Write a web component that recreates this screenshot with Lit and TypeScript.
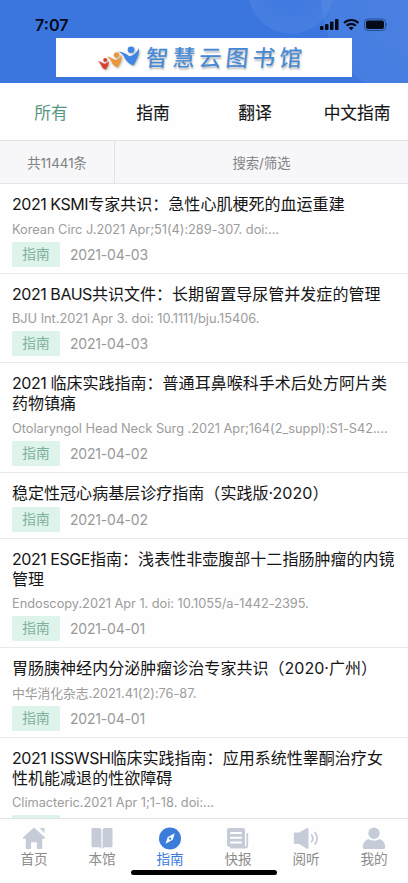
import { LitElement, html, css, svg, nothing } from "lit";
import { customElement } from "lit/decorators.js";
import { classMap } from "lit/directives/class-map.js";

interface Entry {
  latin: string;
  title: string;
  source?: string;
  date: string;
}

const entries: Entry[] = [
  { latin: "2021 KSMI", title: "专家共识：急性心肌梗死的血运重建", source: "Korean Circ J.2021 Apr;51(4):289-307. doi:...", date: "2021-04-03" },
  { latin: "2021 BAUS", title: "共识文件：长期留置导尿管并发症的管理", source: "BJU Int.2021 Apr 3. doi: 10.1111/bju.15406.", date: "2021-04-03" },
  { latin: "2021 ", title: "临床实践指南：普通耳鼻喉科手术后处方阿片类药物镇痛", source: "Otolaryngol Head Neck Surg .2021 Apr;164(2_suppl):S1-S42....", date: "2021-04-02" },
  { latin: "", title: "稳定性冠心病基层诊疗指南（实践版·2020）", date: "2021-04-02" },
  { latin: "2021 ESGE", title: "指南：浅表性非壶腹部十二指肠肿瘤的内镜管理", source: "Endoscopy.2021 Apr 1. doi: 10.1055/a-1442-2395.", date: "2021-04-01" },
  { latin: "", title: "胃肠胰神经内分泌肿瘤诊治专家共识（2020·广州）", source: "中华消化杂志.2021.41(2):76-87.", date: "2021-04-01" },
  { latin: "2021 ISSWSH", title: "临床实践指南：应用系统性睾酮治疗女性机能减退的性欲障碍", source: "Climacteric.2021 Apr 1;1-18. doi:...", date: "2021-04-01" },
];

const navItems = [
  { label: "首页", icon: svg`<path d="M13 1.600 2.200 11.200c-.7.7-.3 1.600.6 1.600h2V22c0 .7.4 1 1 1h3.500c.5 0 .8-.3.8-.8v-6h5.800v6c0 .5.3.8.8.8h3.500c.6 0 1-.3 1-1v-9.200h2c.9 0 1.300-.9.6-1.600z"/><path d="M18.800 2h4.600v5.200z"/>` },
  { label: "本馆", icon: svg`<path d="M4 2h6.200c1.300 0 2.200.8 2.200 2v19c-.7-1-1.600-1.700-2.700-1.700H4c-1 0-1.500-.5-1.500-1.500V3.500C2.500 2.500 3 2 4 2zM15.800 2h6.200c1 0 1.500.5 1.500 1.500v16.300c0 1-.5 1.500-1.500 1.500h-5.700c-1.100 0-2 .7-2.700 1.700V4c0-1.200.9-2 2.200-2z"/>` },
  { label: "指南", icon: svg`<circle cx="13" cy="12.500" r="11"/><path class="cut" d="m17.700 7.300-2 6.500-7.200 4 2.200-6.500z"/><circle cx="13.100" cy="12.600" r="1.200"/>` },
  { label: "快报", icon: svg`<path d="M4 2h14.200c1 0 1.800.8 1.800 1.800V21H4.200C3 21 2 20 2 18.800V4c0-1.200.8-2 2-2z"/><path class="slot" d="M6 7h10M6 11.700h10M6 16.400h10"/><path class="wave" d="M22.300 8v11c0 1.600-.9 2.600-2.500 2.600H6"/>` },
  { label: "阅听", icon: svg`<path d="M2 6.500h4.200l7.300-4.300c1-.6 2-.1 2 1v18.200c0 1.100-1 1.600-2 1l-7.300-4.500H2c-.7 0-1.200-.5-1.200-1.200v-9c0-.7.5-1.200 1.200-1.200z"/><path class="wave" d="M18.600 9c1.500 2 1.500 4.700 0 6.700M22 6.600c2.800 3.200 2.800 8.200 0 11.500"/>` },
  { label: "我的", icon: svg`<circle cx="13" cy="7.300" r="5.700"/><path d="M7.700 13c3.300 2.300 7.300 2.300 10.600 0 3.600 1.200 6 4.300 6 8 0 1.400-.8 2-2 2H3.700c-1.200 0-2-.6-2-2 0-3.700 2.400-6.800 6-8z"/>` },
];

@customElement("app-root")
export class AppRoot extends LitElement {
  static styles = css`
    :host {
      display: flex;
      flex-direction: column;
      height: 883px;
      overflow: hidden;
      background: #fefefe;
      color: #151515;
      font-family: Inter, "Noto Sans CJK SC", sans-serif;
    }
    * { box-sizing: border-box; }
    .header {
      flex: none;
      height: 83px;
      display: flex;
      flex-direction: column;
      background:
        radial-gradient(circle 43px at 291px -9px, rgba(255,255,255,.02), rgba(255,255,255,.06) 42px, transparent 43px),
        radial-gradient(circle 105px at 426px -1px, rgba(255,255,255,.08), rgba(255,255,255,.06) 90px, rgba(255,255,255,.05) 104px, transparent 105px),
        #3b76df;
    }
    .status {
      height: 38px;
      display: flex;
      align-items: center;
      justify-content: space-between;
      padding: 11px 21px 0 35px;
      color: #050a18;
      font-size: 16.200px;
      font-weight: 600;
    }
    .status svg { width: 67px; height: 14px; }
    .brand {
      width: 296px;
      height: 39px;
      margin-left: 56px;
      padding-left: 41px;
      display: flex;
      align-items: center;
      gap: 6px;
      background: #fff;
    }
    .brand svg { width: 43px; height: 26px; filter: drop-shadow(1px 1px 1px rgba(0,0,0,.3)); }
    .name {
      font-family: "Noto Sans CJK SC", sans-serif;
      font-size: 22.500px;
      font-weight: 400;
      letter-spacing: 4.200px;
      color: #4488d6;
      line-height: 36px;
      margin-top: -4px;
      transform: skewX(-6deg);
      -webkit-text-stroke: .2px #4488d6;
      text-shadow: 1px 2px 2px rgba(0,0,0,.3);
      white-space: nowrap;
    }
    .tabs {
      flex: none;
      height: 57px;
      display: grid;
      grid-template-columns: repeat(4, 1fr);
      align-items: center;
      text-align: center;
      font-size: 16.700px;
      -webkit-text-stroke: .15px currentColor;
    }
    .tab.on { color: #58967f; -webkit-text-stroke: 0; }
    .filter {
      flex: none;
      height: 44.400px;
      display: flex;
      background: #f7f7fa;
      border-top: 1px solid #e6e3e8;
      border-bottom: 1px solid #e6e3e8;
      color: #808082;
      font-size: 13.300px;
      line-height: 44px;
      text-align: center;
    }
    .count { width: 115px; border-right: 1px solid #e4e2e7; }
    .search { flex: 1; }
    .list { flex: 1; min-height: 0; overflow: hidden; }
    .entry { padding: 10px 12px 6px; border-bottom: 1px solid #e9e8ea; }
    .title { font-size: 16px; line-height: 20px; letter-spacing: .03px; }
    .latin { letter-spacing: -.45px; }
    .source {
      margin-top: 6.500px;
      font-size: 12.800px;
      line-height: 18.500px;
      color: #9c9c9c;
      letter-spacing: -.03px;
      white-space: nowrap;
    }
    .meta {
      margin-top: 4px;
      display: flex;
      align-items: center;
      gap: 10px;
      height: 25px;
      font-size: 14px;
      letter-spacing: -.2px;
      color: #999;
    }
    .source + .meta { margin-top: 2.500px; }
    .tag {
      width: 48px;
      height: 25px;
      border-radius: 2px;
      background: #def3ea;
      color: #7db19a;
      font-size: 13.700px;
      letter-spacing: 0;
      line-height: 25px;
      text-align: center;
    }
    .nav {
      flex: none;
      height: 65px;
      display: grid;
      grid-template-columns: repeat(6, 1fr);
      border-top: 1px solid #dfe2e6;
      background: #fefefe;
      position: relative;
    }
    .item {
      display: flex;
      flex-direction: column;
      align-items: center;
      padding-top: 6.500px;
      color: #8c8c8c;
      font-size: 13.600px;
      line-height: 17px;
    }
    .item svg { width: 26px; height: 25px; fill: #c5ccd8; }
    .item.on { color: #3b7be0; }
    .item.on svg { fill: #3a7ddb; }
    .item .cut { fill: #fff; }
    .slot { fill: none; stroke: #fff; stroke-width: 2; stroke-linecap: round; }
    .wave { fill: none; stroke: #c5ccd8; stroke-width: 1.800; stroke-linecap: round; }
    .homebar {
      position: absolute;
      left: 131px;
      bottom: 8px;
      width: 146px;
      height: 5px;
      border-radius: 3px;
      background: #000;
    }
  `;

  render() {
    return html`
      <div class="header">
        <div class="status">
          <span>7:07</span>
          <svg viewBox="0 0 67 14" fill="#050a18">
            <rect x="0" y="8" width="3.500" height="4" rx=".8" /><rect x="5" y="6" width="3.500" height="6" rx=".8" />
            <rect x="10" y="3.500" width="3.500" height="8.500" rx=".8" /><rect x="15" y="1" width="3.500" height="11" rx=".8" />
            <g fill="none" stroke="#050a18" stroke-width="2.100"><path d="M24 5c4-4 10.400-4 14.400 0M26.600 7.700c2.600-2.500 6.600-2.500 9.200 0" /></g>
            <path d="M28.700 9.800c1.500-1.300 3.500-1.300 5 0L31.200 12.300z" />
            <rect x="44.500" y="1" width="21" height="11.500" rx="3.500" fill="none" stroke="#28508f" />
            <rect x="46" y="2.500" width="18" height="8.500" rx="2" /><path d="M66.200 5v3.600q1-.5 1-1.800t-1-1.800z" fill="#28508f" />
          </svg>
        </div>
        <div class="brand">
          <svg viewBox="0 0 43 26">
            <g fill="#d8402f"><circle cx="8.200" cy="15" r="2" /><path d="M.5 16c3 .5 4.500 1.500 6.700 2.800 2.300-.3 3.500-1.500 4.800-2.800 0 3.500-1.500 6-3.500 8.800-2.800-1-3.700-3-4.700-5.300C3 18 2 17 .5 16z" /></g>
            <g fill="#eb963b"><circle cx="19.500" cy="10" r="2.700" /><path d="M9.500 11.500c4 .5 6 2 8.700 3.500 3-.5 5-2.800 6.600-5 .2 5-1.800 8.500-4.300 12.500-4-1.500-5.500-4-6.700-7-1-2-2.400-3-4.300-4z" /></g>
            <g fill="#3f85e3"><circle cx="34" cy="4.800" r="3.300" /><path d="M20.500 6.500c5.500.3 8.500 2.500 12 4.700 4.500-.7 7.300-4.400 9.500-8 .6 7-2.500 11.800-5.500 17.300-5.500-2-8.200-5.500-9.500-9-1.300-2.500-3.500-4-6.500-5z" /></g>
          </svg>
          <span class="name">智慧云图书馆</span>
        </div>
      </div>
      <div class="tabs">
        ${["所有", "指南", "翻译", "中文指南"].map((t, i) => html`<span class=${classMap({ tab: true, on: i === 0 })}>${t}</span>`)}
      </div>
      <div class="filter"><span class="count">共11441条</span><span class="search">搜索/筛选</span></div>
      <div class="list">
        ${entries.map((e) => html`
          <div class="entry">
            <div class="title">${e.latin ? html`<span class="latin">${e.latin}</span>` : nothing}${e.title}</div>
            ${e.source ? html`<div class="source">${e.source}</div>` : nothing}
            <div class="meta"><span class="tag">指南</span><span>${e.date}</span></div>
          </div>`)}
      </div>
      <div class="nav">
        ${navItems.map((n, i) => html`
          <div class=${classMap({ item: true, on: i === 2 })}><svg viewBox="0 0 26 25">${n.icon}</svg><span>${n.label}</span></div>`)}
        <div class="homebar"></div>
      </div>
    `;
  }
}
